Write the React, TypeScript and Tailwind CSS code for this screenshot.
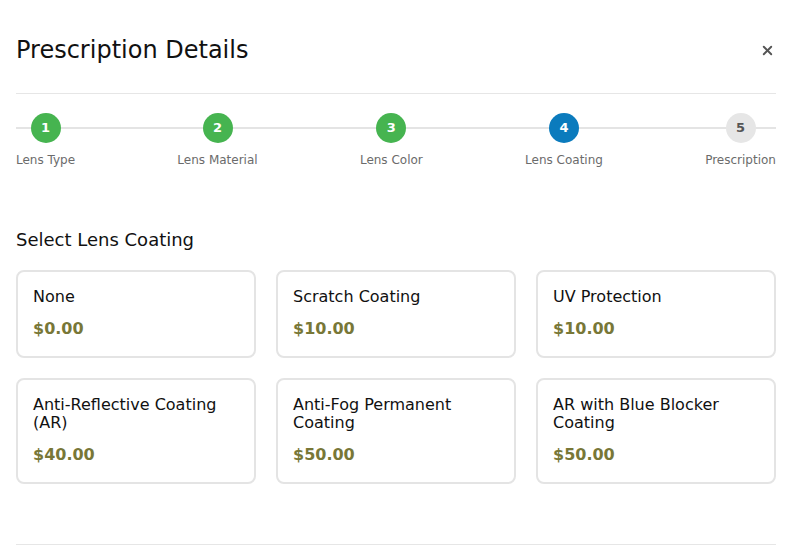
import { X } from "lucide-react"

const steps = [
    { n: 1, label: "Lens Type", state: "done" },
    { n: 2, label: "Lens Material", state: "done" },
    { n: 3, label: "Lens Color", state: "done" },
    { n: 4, label: "Lens Coating", state: "active" },
    { n: 5, label: "Prescription", state: "todo" },
]

const coatings = [
    { name: "None", price: "$0.00" },
    { name: "Scratch Coating", price: "$10.00" },
    { name: "UV Protection", price: "$10.00" },
    { name: "Anti-Reflective Coating (AR)", price: "$40.00" },
    { name: "Anti-Fog Permanent Coating", price: "$50.00" },
    { name: "AR with Blue Blocker Coating", price: "$50.00" },
]

function StepCircle({ n, state }: { n: number; state: string }) {
    const color =
        state === "done"
            ? "bg-[#46b450] text-white"
            : state === "active"
            ? "bg-[#0b7bbd] text-white"
            : "bg-[#e6e6e6] text-[#555555]"
    return (
        <div className={`relative z-10 flex h-[30px] w-[30px] items-center justify-center rounded-full text-[13px] font-bold ${color}`}>
            {n}
        </div>
    )
}

export default function App() {
    return (
        <div className="min-h-screen bg-white pl-4 pr-[17px] text-[#111111]" style={{ fontFamily: "'DejaVu Sans', 'Noto Sans', sans-serif" }}>
            <div className="flex items-center justify-between border-b border-[#e6e6e6] pt-[30px] pb-[23px]">
                <h2 className="text-[24px] leading-[40px] font-normal">Prescription Details</h2>
                <button className="mr-[1px] text-[#555555]">
                    <X className="h-[15px] w-[15px]" strokeWidth={3} />
                </button>
            </div>

            <div className="relative mt-[19px] flex justify-between">
                <div className="absolute top-[14px] left-0 right-0 h-[2px] bg-[#e4e4e4]" />
                {steps.map((s) => (
                    <div key={s.n} className="flex flex-col items-center">
                        <StepCircle n={s.n} state={s.state} />
                        <span className="mt-[8px] text-[12px] leading-[18px] text-[#6b6b6b]">{s.label}</span>
                    </div>
                ))}
            </div>

            <h3 className="mt-[59px] mb-[18px] text-[18px] leading-[24px]">Select Lens Coating</h3>

            <div className="grid grid-cols-3 gap-x-5 gap-y-5">
                {coatings.map((c) => (
                    <div key={c.name} className="rounded-lg border-2 border-[#e4e4e4] px-[15px] pt-[16px] pb-[15px]">
                        <div className="text-[16px] leading-[18px]">{c.name}</div>
                        <div className="mt-[11px] text-[16px] leading-[24px] font-bold text-[#787737]">{c.price}</div>
                    </div>
                ))}
            </div>

            <div className="mt-[60px] border-t border-[#e6e6e6]" />
        </div>
    )
}
